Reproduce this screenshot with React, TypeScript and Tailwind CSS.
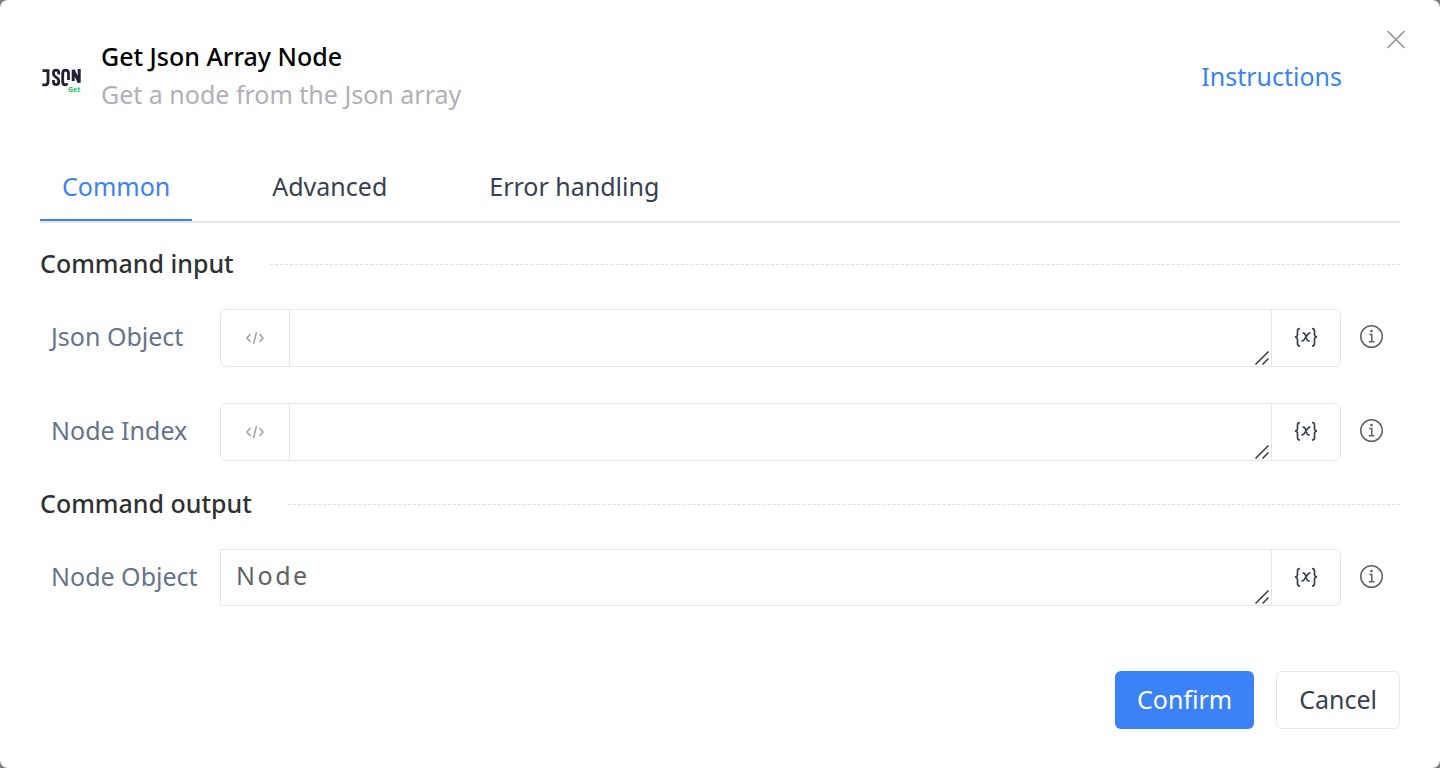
import React, { useState } from 'react';

const TABS = ['Common', 'Advanced', 'Error handling'];

const INPUT_FIELDS = [
  { id: 'json-object', label: 'Json Object' },
  { id: 'node-index', label: 'Node Index' },
];

function JsonGetLogo() {
  return (
    <svg className="w-[42px] h-[42px] shrink-0" viewBox="0 0 42 42" role="img" aria-label="JSON Get">
      <g fill="none" stroke="#242031" strokeWidth="2.8">
        <path d="M2.500 15.700h5.500v10.800q0 3.300-2.500 3.300h-3.200" />
        <path d="M18.700 19.500v-2q0-2.300-2.600-2.300t-2.600 2.300v1.500q0 1.800 2.600 3.300t2.600 3.300v1.500q0 2.600-2.600 2.600t-2.600-2.600v-2" />
        <path d="M27.500 28.500q-1 1.300-2.300 1.300-2.500 0-2.500-3.300v-8q0-3.300 2.900-3.300t2.900 3.300v6.500" />
        <path d="M33.200 26V15l6 12.500V14" strokeWidth="3" />
      </g>
      <text x="28" y="37" fontSize="7" fontWeight="700" fill="#22c55e" fontFamily="Noto Sans, sans-serif">Get</text>
    </svg>
  );
}

function CodeIcon() {
  return (
    <svg className="w-5 h-5" viewBox="0 0 20 20" fill="none" stroke="#9ca3af" strokeWidth="1.5">
      <path d="M5.500 6 2 10l3.500 4M14.500 6l3.500 4-3.500 4M11.500 4l-3 12" />
    </svg>
  );
}

function VariableIcon() {
  return (
    <svg className="w-6 h-6" viewBox="0 0 24 24" fill="none" stroke="#374151" strokeWidth="1.7">
      <path d="M6 3.500q-2.500 0-2.500 2.500v3.500q0 2.200-2.500 2.500 2.500.3 2.500 2.500v4q0 2.500 2.500 2.500" />
      <path d="M18 3.500q2.500 0 2.500 2.500v3.500q0 2.200 2.500 2.500-2.500.3-2.500 2.500v4q0 2.500-2.500 2.500" />
      <path d="M8.500 8.200q2-.6 2.700 1.300l1.700 5q.7 1.900 2.700 1.300M16.500 8.200q-1.500-.4-2.600 1l-3.800 5.500q-1.100 1.500-2.600 1" />
    </svg>
  );
}

function InfoIcon() {
  return (
    <svg className="w-6 h-6" viewBox="0 0 24 24" fill="none" stroke="#606266" strokeWidth="1.5">
      <circle cx="11.500" cy="11.500" r="10.750" />
      <path d="M9.300 9.500h2.500v7.200M8.800 16.800h5.600" />
      <circle cx="11.500" cy="6.100" r="1.300" fill="#606266" stroke="none" />
    </svg>
  );
}

function ResizeGrip() {
  return (
    <svg className="absolute right-px bottom-0 w-4 h-4 pointer-events-none" viewBox="0 0 16 16" fill="none" stroke="#444" strokeWidth="1.6">
      <path d="M1.500 14.500l13-13M8.500 14.500l6-6" />
    </svg>
  );
}

function SectionTitle({ children }: { children: React.ReactNode }) {
  return (
    <div className="flex items-center gap-9">
      <h2 className="pb-[2px] font-medium text-[#303133]">{children}</h2>
      <div className="flex-1 border-t border-dashed border-[#dcdfe6]" />
    </div>
  );
}

type FieldProps = {
  id: string;
  label: string;
  value: string;
  onChange: (value: string) => void;
  code?: boolean;
};

function Field({ id, label, value, onChange, code = false }: FieldProps) {
  return (
    <div className="flex items-center">
      <label htmlFor={id} className="w-[180px] shrink-0 pl-[11px] pb-1 text-[#64748b] whitespace-nowrap">{label}</label>
      <div className={`flex flex-1 min-w-0 border border-[#e5e7eb] overflow-hidden ${code ? 'h-[58px] rounded-md' : 'h-[57px] rounded-r-md'}`}>
        {code && (
          <button type="button" aria-label="Edit expression" className="w-[69px] shrink-0 flex items-center justify-center border-r border-[#e5e7eb]">
            <CodeIcon />
          </button>
        )}
        <div className="relative flex flex-1 min-w-0">
          <textarea
            id={id}
            rows={1}
            value={value}
            onChange={e => onChange(e.target.value)}
            className="w-full h-full resize-none px-[15px] py-[7px] overflow-hidden outline-none tracking-widest text-[#606266]"
          />
          <ResizeGrip />
        </div>
        <button type="button" aria-label="Insert variable" className="w-[69px] shrink-0 flex items-center justify-center pb-[2px] border-l border-[#e5e7eb]">
          <VariableIcon />
        </button>
      </div>
      <button type="button" aria-label={`About ${label}`} className="w-[59px] shrink-0 pl-[19px] pb-[2px]">
        <InfoIcon />
      </button>
    </div>
  );
}

export default function App() {
  const [tab, setTab] = useState('Common');
  const [values, setValues] = useState<Record<string, string>>({ 'node-object': 'Node' });

  const setValue = (id: string) => (value: string) => setValues({ ...values, [id]: value });

  return (
    <div className="min-h-screen flex bg-[#7f7f7f] font-['Noto_Sans',sans-serif] text-[25px] leading-[36px]">
      <div role="dialog" aria-label="Get Json Array Node" className="relative flex-1 bg-white rounded-lg px-10 pt-[38px] pb-[39px]">
        <button type="button" aria-label="Close" className="absolute top-[29px] right-[33px]">
          <svg className="w-[22px] h-[22px]" viewBox="0 0 22 22" fill="none" stroke="#909399" strokeWidth="1.6">
            <path d="M2.500 2l17 17M19.500 2l-17 17" />
          </svg>
        </button>

        <header className="flex items-center">
          <JsonGetLogo />
          <div className="ml-[19px] flex-1 flex flex-col gap-[2px] pb-[2px]">
            <h1 className="font-medium text-black">Get Json Array Node</h1>
            <p className="text-[#b1b0b8]">Get a node from the Json array</p>
          </div>
          <a href="#instructions" className="mr-[58px] text-[#3b82f6]">Instructions</a>
        </header>

        <div role="tablist" className="mt-[54px] flex gap-[58px] border-b-2 border-[#e4e7ed]">
          {TABS.map(t => (
            <button
              key={t}
              type="button"
              role="tab"
              aria-selected={t === tab}
              onClick={() => setTab(t)}
              className={`px-[22px] pb-[15px] border-b-2 ${t === tab ? 'text-[#3b82f6] border-[#3b82f6]' : 'text-[#374151] border-transparent'}`}
            >
              {t}
            </button>
          ))}
        </div>

        <section className="mt-[22px]">
          <SectionTitle>Command input</SectionTitle>
          <div className="mt-[26px] flex flex-col gap-9">
            {INPUT_FIELDS.map(f => (
              <Field key={f.id} id={f.id} label={f.label} value={values[f.id] ?? ''} onChange={setValue(f.id)} code />
            ))}
          </div>
        </section>

        <section className="mt-6">
          <SectionTitle>Command output</SectionTitle>
          <div className="mt-[26px]">
            <Field id="node-object" label="Node Object" value={values['node-object']} onChange={setValue('node-object')} />
          </div>
        </section>

        <footer className="mt-[65px] flex justify-end gap-[22px]">
          <button type="button" className="h-[58px] px-[22px] pb-[2px] rounded-md bg-[#3b82f6] text-white">Confirm</button>
          <button type="button" className="h-[58px] px-[22px] pb-[2px] rounded-md border border-[#e5e7eb] text-[#374151]">Cancel</button>
        </footer>
      </div>
    </div>
  );
}
